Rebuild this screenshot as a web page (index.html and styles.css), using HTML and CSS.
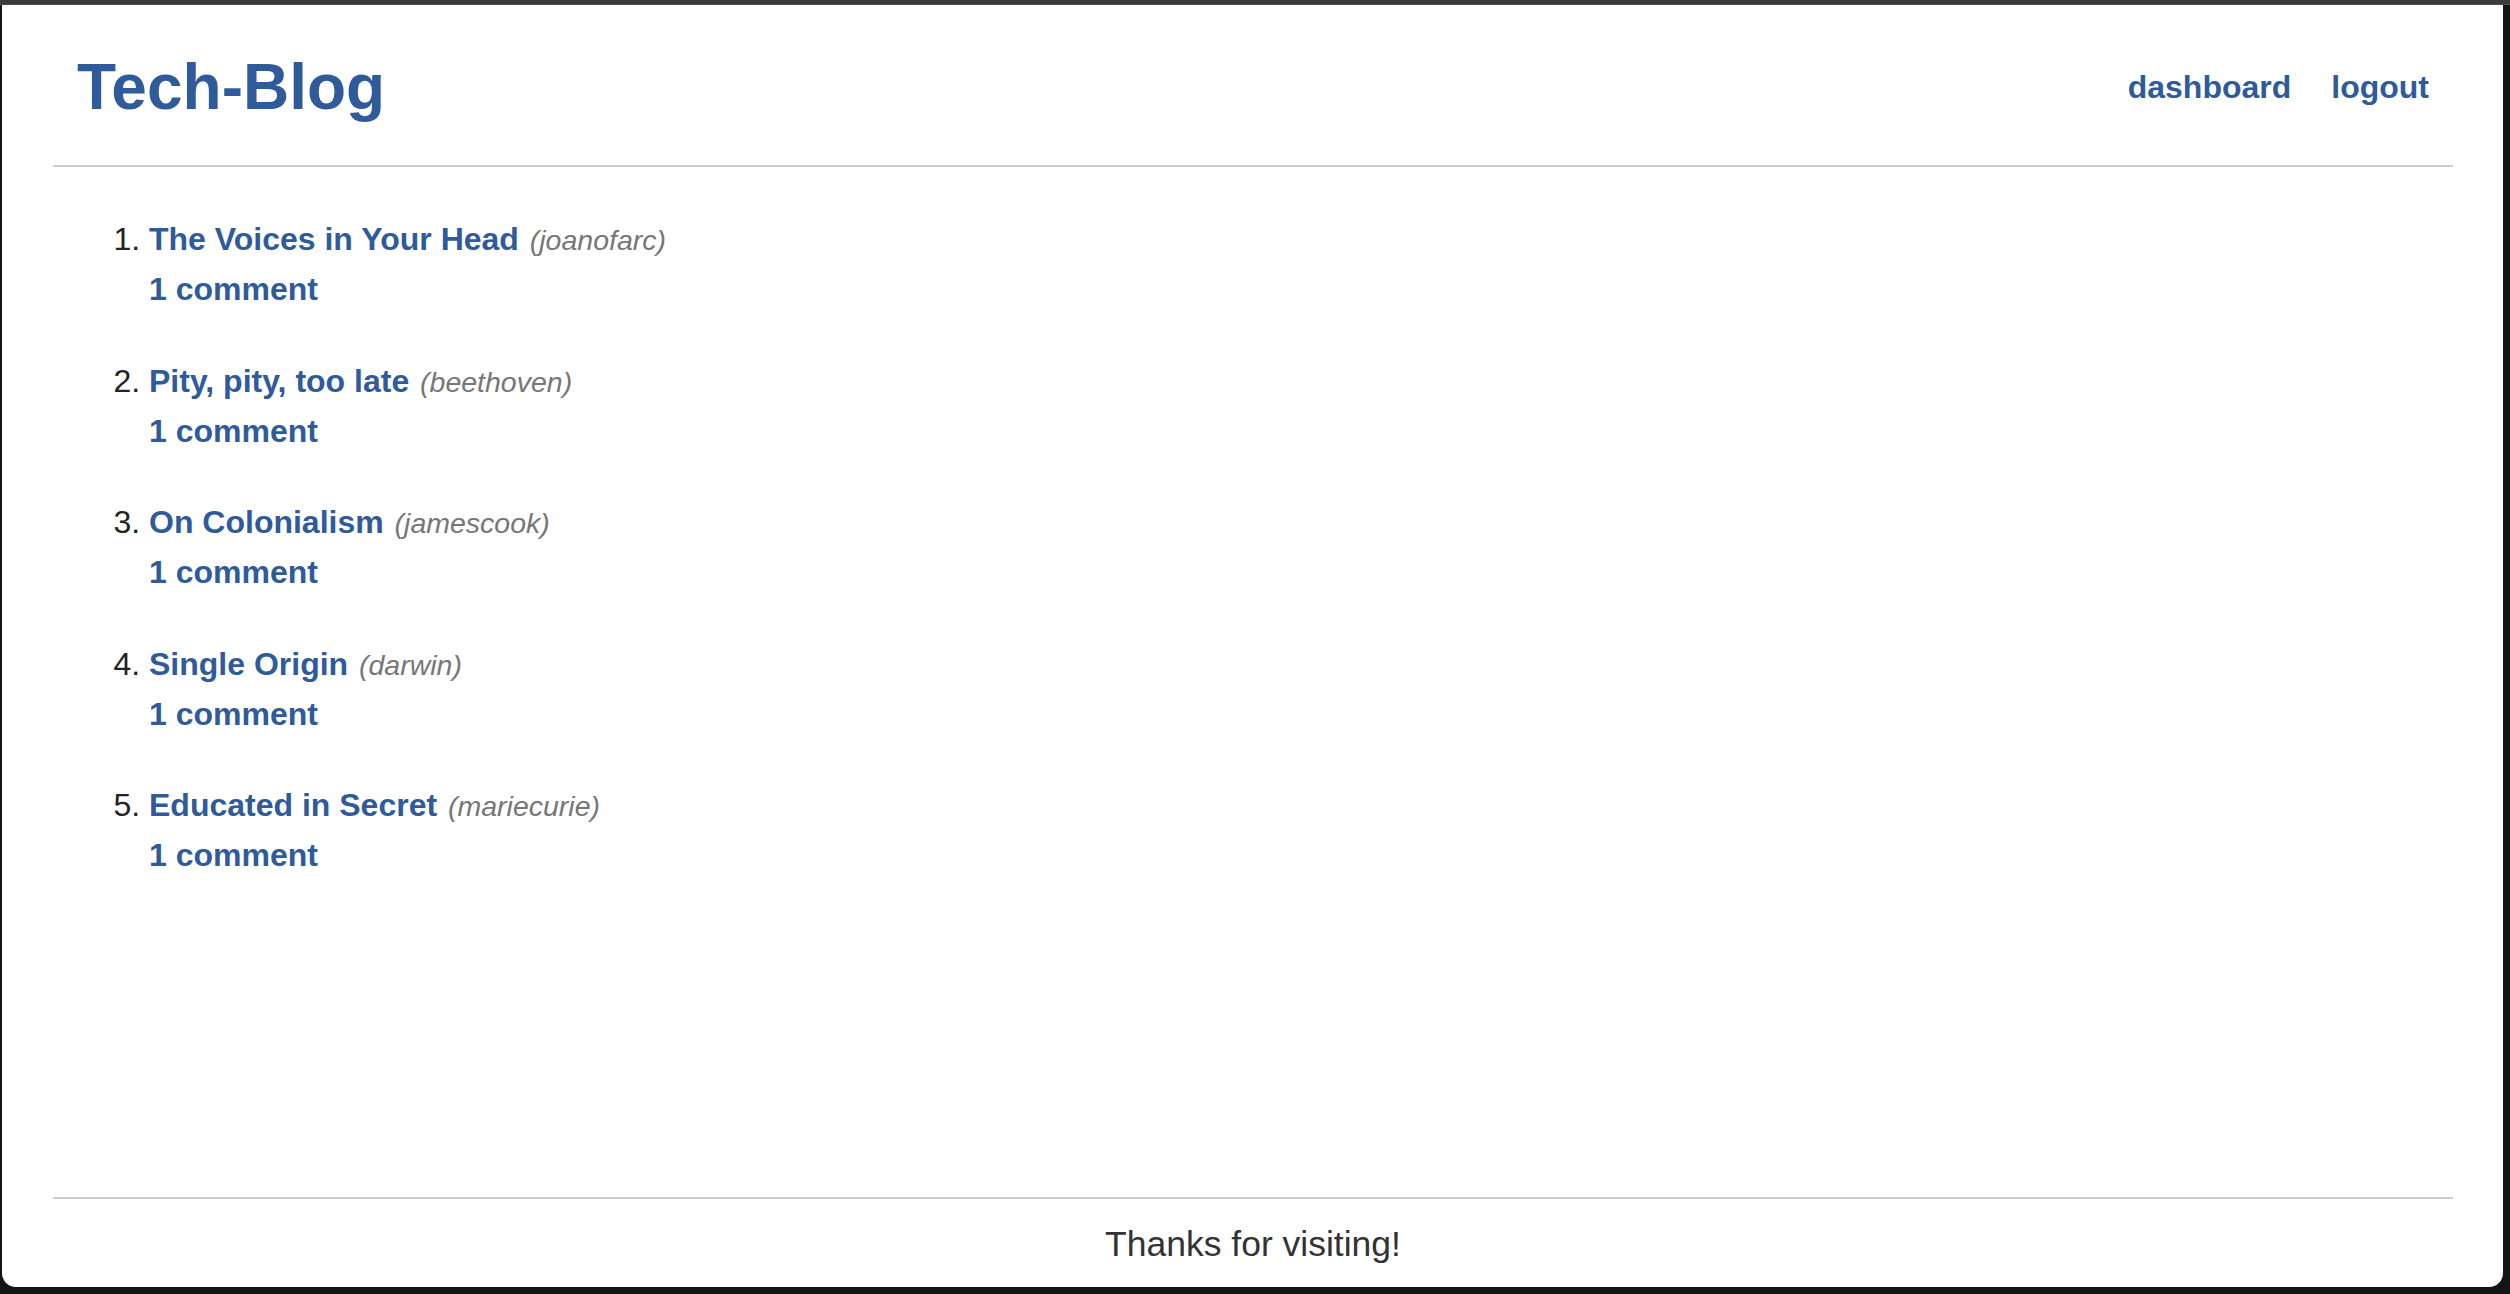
FILE: index.html
```html
<!DOCTYPE html>
<html lang="en">
<head>
<meta charset="utf-8">
<title>Tech-Blog</title>
<link rel="stylesheet" href="styles.css">
</head>
<body>
<div class="topbar"></div>
<div class="window">
  <header class="site-header">
    <a class="brand" href="#">Tech-Blog</a>
    <nav class="nav">
      <a href="#">dashboard</a>
      <a href="#">logout</a>
    </nav>
  </header>
  <main class="content">
    <ol class="posts">
      <li>
        <a class="post-title" href="#">The Voices in Your Head</a> <span class="author">(joanofarc)</span>
        <div class="comments"><a href="#">1 comment</a></div>
      </li>
      <li>
        <a class="post-title" href="#">Pity, pity, too late</a> <span class="author">(beethoven)</span>
        <div class="comments"><a href="#">1 comment</a></div>
      </li>
      <li>
        <a class="post-title" href="#">On Colonialism</a> <span class="author">(jamescook)</span>
        <div class="comments"><a href="#">1 comment</a></div>
      </li>
      <li>
        <a class="post-title" href="#">Single Origin</a> <span class="author">(darwin)</span>
        <div class="comments"><a href="#">1 comment</a></div>
      </li>
      <li>
        <a class="post-title" href="#">Educated in Secret</a> <span class="author">(mariecurie)</span>
        <div class="comments"><a href="#">1 comment</a></div>
      </li>
    </ol>
  </main>
  <footer class="site-footer">Thanks for visiting!</footer>
</div>
</body>
</html>
```

FILE: styles.css
```css
html, body {
  margin: 0;
  padding: 0;
}

body {
  background: #141414;
  font-family: "Liberation Sans", Arial, Helvetica, sans-serif;
  width: 2510px;
  height: 1294px;
  overflow: hidden;
}

.topbar {
  height: 4px;
  background: #3b3b3d;
  border-bottom: 1px solid #4e4e50;
}

.window {
  margin-left: 2px;
  width: 2501px;
  height: 1282px;
  box-sizing: border-box;
  padding: 0 50px 0 51px;
  background: #ffffff;
  border-radius: 0 0 14px 14px;
  display: flex;
  flex-direction: column;
}

a {
  color: #2f5b9b;
  text-decoration: none;
  font-weight: bold;
}

.site-header {
  display: flex;
  justify-content: space-between;
  align-items: center;
  padding: 46px 24px 42px 24px;
  border-bottom: 2px solid #cccccc;
}

.brand {
  font-size: 64px;
  line-height: 72px;
}

.nav {
  display: flex;
  gap: 40px;
  font-size: 32px;
  line-height: 40px;
}

.content {
  flex: 1;
  padding-top: 48px;
}

.posts {
  margin: 0;
  padding-left: 96px;
  font-size: 32px;
  line-height: 49px;
  color: #222222;
}

.posts li {
  margin-bottom: 42.5px;
}

.author {
  margin-left: 2px;
  font-style: italic;
  font-size: 28.5px;
  color: #777777;
}

.site-footer {
  border-top: 2px solid #cccccc;
  padding: 24px 0 22px;
  text-align: center;
  font-size: 35.5px;
  line-height: 42px;
  color: #333333;
}
```
